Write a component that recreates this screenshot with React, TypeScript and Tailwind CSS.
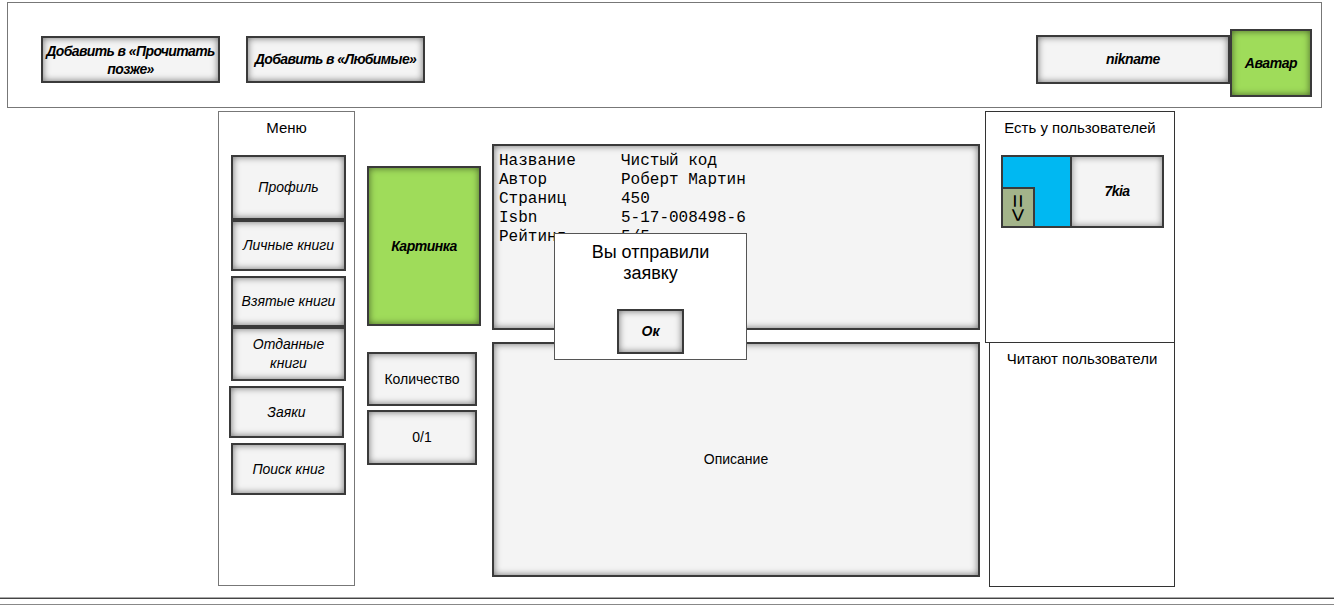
import React from "react";

// base look of the mockup buttons: dark frame + inner shadow, background set per use
const btn =
  "flex items-center justify-center text-center border-2 border-[#3a3a3a] shadow-[inset_0_0_7px_rgba(0,0,0,0.55)] text-black";
const grey = `${btn} bg-[#f4f4f4]`;
const green = `${btn} bg-[#9fdc5a]`;

const App: React.FC = () => {
  return (
    <div className="relative w-[1334px] h-[606px] overflow-hidden bg-white font-['Liberation_Sans',Arial,sans-serif] text-black">
      {/* Header */}
      <div className="mt-[2px] ml-[7px] w-[1315px] h-[106px] border border-[#777] flex items-start pl-[33px] pr-[9px]">
        <div className={`${grey} mt-[33px] w-[179px] h-[47px] text-[14px] leading-[18px] font-bold italic tracking-[-0.6px]`}>
          Добавить в «Прочитать
          <br />
          позже»
        </div>
        <div className={`${grey} mt-[33px] ml-[26px] w-[179px] h-[47px] text-[14px] font-bold italic tracking-[-0.6px]`}>
          Добавить в «Любимые»
        </div>
        <div className={`${grey} mt-[32px] ml-auto w-[194px] h-[49px] text-[14px] font-bold italic tracking-[-0.4px]`}>
          nikname
        </div>
        <div className={`${green} mt-[26px] w-[82px] h-[68px] text-[14px] font-bold italic tracking-[-0.4px]`}>
          Аватар
        </div>
      </div>

      {/* Main */}
      <div className="flex h-[489px]">
        {/* Menu */}
        <div className="ml-[218px] mt-[3px] w-[137px] h-[475px] border border-[#777] flex flex-col">
          <div className="pt-[6px] text-center text-[15px] leading-[20px]">Меню</div>
          <div className={`${grey} mt-[17px] ml-[12px] w-[115px] h-[65px] text-[14px] italic`}>Профиль</div>
          <div className={`${grey} ml-[12px] w-[115px] h-[51px] text-[14px] italic`}>Личные книги</div>
          <div className={`${grey} mt-[5px] ml-[12px] w-[115px] h-[51px] text-[14px] italic`}>Взятые книги</div>
          <div className={`${grey} ml-[12px] w-[115px] h-[54px] text-[14px] leading-[19px] italic`}>
            Отданные
            <br />
            книги
          </div>
          <div className={`${grey} mt-[5px] ml-[10px] w-[115px] h-[52px] text-[14px] italic`}>Заяки</div>
          <div className={`${grey} mt-[5px] ml-[12px] w-[115px] h-[52px] text-[14px] italic`}>Поиск книг</div>
        </div>

        {/* Picture & count */}
        <div className="ml-[12px] w-[114px] flex flex-col">
          <div className={`${green} mt-[58px] w-[114px] h-[160px] text-[14px] font-bold italic tracking-[-0.5px]`}>
            Картинка
          </div>
          <div className={`${grey} mt-[26px] w-[110px] h-[54px] text-[14px]`}>Количество</div>
          <div className={`${grey} mt-[4px] w-[110px] h-[55px] text-[14px]`}>0/1</div>
        </div>

        {/* Info & description */}
        <div className="relative ml-[11px] w-[488px] flex flex-col">
          <div className="mt-[36px] h-[186px] border-2 border-[#3a3a3a] bg-[#f4f4f4] shadow-[inset_0_0_7px_rgba(0,0,0,0.55)] pt-[6px] pl-[5px]">
            <div className="grid grid-cols-[122px_1fr] font-['Liberation_Mono','Courier_New',monospace] text-[16px] leading-[19px]">
              <span>Название</span>
              <span>Чистый код</span>
              <span>Автор</span>
              <span>Роберт Мартин</span>
              <span>Страниц</span>
              <span>450</span>
              <span>Isbn</span>
              <span>5-17-008498-6</span>
              <span>Рейтинг</span>
              <span>5/5</span>
            </div>
          </div>
          <div className={`${grey} mt-[12px] h-[235px] text-[14px]`}>Описание</div>

          {/* Modal */}
          <div className="absolute left-[62px] top-[125px] w-[193px] h-[127px] bg-white border border-[#555] flex flex-col items-center">
            <div className="mt-[8px] text-center text-[18px] leading-[21px]">
              Вы отправили
              <br />
              заявку
            </div>
            <div className={`${grey} mt-[25px] w-[67px] h-[45px] text-[14px] font-bold italic`}>Ок</div>
          </div>
        </div>

        {/* Right column */}
        <div className="ml-[5px] flex flex-col">
          <div className="mt-[3px] w-[190px] h-[232px] border border-[#333] flex flex-col">
            <div className="pt-[6px] text-center text-[15px] leading-[20px]">Есть у пользователей</div>
            <div className="mt-[17px] ml-[15px] w-[163px] h-[73px] flex border-2 border-[#3a3a3a]">
              <div className="w-[69px] h-full bg-[#00b8f2] border-r-2 border-[#3a3a3a] flex items-end">
                <div className="w-[32px] h-[39px] bg-[#a3b48a] border-t-2 border-r-2 border-[#3a3a3a] flex items-center justify-center overflow-hidden">
                  <span className="rotate-90 text-[24px] leading-none">=&gt;</span>
                </div>
              </div>
              <div className="flex-1 flex items-center justify-center bg-[#f4f4f4] shadow-[inset_0_0_7px_rgba(0,0,0,0.45)] text-[14px] font-bold italic tracking-[-0.5px]">
                7kia
              </div>
            </div>
          </div>
          <div className="-mt-[1px] ml-[4px] w-[186px] h-[245px] border border-[#333] bg-white">
            <div className="pt-[6px] text-center text-[15px] leading-[20px]">Читают пользователи</div>
          </div>
        </div>
      </div>

      {/* Footer lines */}
      <div className="h-[2px] border-t border-[#aaa] bg-[#444]" />
      <div className="mt-[5px] h-[1px] bg-[#888]" />
    </div>
  );
};

export default App;
